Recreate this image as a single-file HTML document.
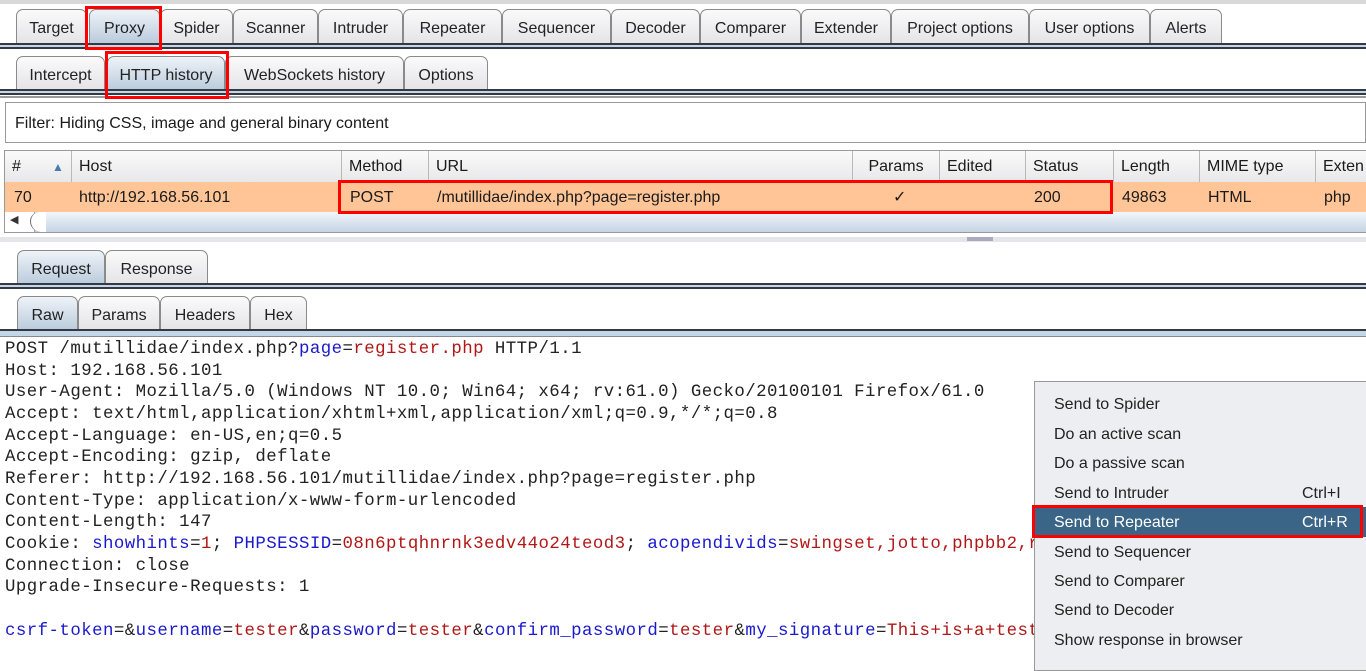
<!DOCTYPE html>
<html><head><meta charset="utf-8"><style>
*{box-sizing:border-box;margin:0;padding:0}
body{width:1366px;height:658px;overflow:hidden;background:#fff;font-family:"Liberation Sans",sans-serif;font-size:16px;color:#1a1a1a;position:relative}
.a{position:absolute}
.tab{position:absolute;height:35px;border:1px solid #8a8a8a;border-bottom:none;border-radius:7px 7px 0 0;background:linear-gradient(#fafafa,#e4e4e8);text-align:center;line-height:37px;font-size:16px;color:#222}
.tab.sel{background:linear-gradient(#eef3f8,#b9cadb)}
.band{position:absolute;left:0;width:1366px;height:6px;border-top:2px solid #333a44;border-bottom:2px solid #333a44;background:#c5d6e6}
.red{position:absolute;border:3px solid #f00}
.hc{position:absolute;top:151px;height:31px;line-height:32px;border-right:1px solid #b9b9b9;padding-left:7px;background:linear-gradient(#fafafa,#e8e8ea)}
.rc{position:absolute;top:182px;height:30px;line-height:32px;padding-left:7px}
.code{position:absolute;left:5px;top:339px;font-family:"Liberation Mono",monospace;font-size:17.4px;line-height:21.65px;white-space:pre;color:#222;letter-spacing:0.45px}
.b{color:#1a1acc}.r{color:#b01818}
.menu{position:absolute;left:1034px;top:381px;width:340px;height:290px;background:#eceef2;border:1px solid #999}
.mi{position:absolute;left:19px;font-size:16px;color:#222}
</style></head><body>
<div class="a" style="left:0;top:0;width:1366px;height:4px;background:#d8d8d8"></div>
<div class="tab" style="left:16px;top:9px;width:71px">Target</div>
<div class="tab sel" style="left:89px;top:9px;width:71px">Proxy</div>
<div class="tab" style="left:160px;top:9px;width:73px">Spider</div>
<div class="tab" style="left:233px;top:9px;width:85px">Scanner</div>
<div class="tab" style="left:318px;top:9px;width:85px">Intruder</div>
<div class="tab" style="left:403px;top:9px;width:99px">Repeater</div>
<div class="tab" style="left:502px;top:9px;width:109px">Sequencer</div>
<div class="tab" style="left:611px;top:9px;width:89px">Decoder</div>
<div class="tab" style="left:700px;top:9px;width:101px">Comparer</div>
<div class="tab" style="left:801px;top:9px;width:90px">Extender</div>
<div class="tab" style="left:891px;top:9px;width:138px">Project options</div>
<div class="tab" style="left:1029px;top:9px;width:121px">User options</div>
<div class="tab" style="left:1150px;top:9px;width:72px">Alerts</div>
<div class="band" style="top:43px"></div>
<div class="tab" style="left:16px;top:56px;width:89px">Intercept</div>
<div class="tab sel" style="left:107px;top:56px;width:118px">HTTP history</div>
<div class="tab" style="left:225px;top:56px;width:179px">WebSockets history</div>
<div class="tab" style="left:404px;top:56px;width:84px">Options</div>
<div class="band" style="top:89px"></div>
<div class="a" style="left:0;top:96px;width:1366px;height:2px;background:#999"></div>
<div class="a" style="left:5px;top:102px;width:1361px;height:41px;border:1px solid #999;background:#fff;padding-left:9px;line-height:42px;font-size:16px">Filter: Hiding CSS, image and general binary content</div>
<div class="a" style="left:4px;top:150px;width:1362px;height:83px;border:1px solid #999"></div>
<div class="hc" style="left:5px;width:67px">#<span style="position:absolute;left:47px;top:0;color:#4a7ab0;font-size:12px">▲</span></div>
<div class="hc" style="left:72px;width:270px">Host</div>
<div class="hc" style="left:342px;width:87px">Method</div>
<div class="hc" style="left:429px;width:424px">URL</div>
<div class="hc" style="left:853px;width:87px;text-align:center;padding:0">Params</div>
<div class="hc" style="left:940px;width:86px">Edited</div>
<div class="hc" style="left:1026px;width:88px">Status</div>
<div class="hc" style="left:1114px;width:86px">Length</div>
<div class="hc" style="left:1200px;width:116px">MIME type</div>
<div class="hc" style="left:1316px;width:50px;border:none">Exten</div>
<div class="a" style="left:5px;top:182px;width:1361px;height:30px;background:#ffc597"></div>
<div class="rc" style="left:7px">70</div>
<div class="rc" style="left:72px">http://192.168.56.101</div>
<div class="rc" style="left:343px">POST</div>
<div class="rc" style="left:430px">/mutillidae/index.php?page=register.php</div>
<div class="rc" style="left:886px">✓</div>
<div class="rc" style="left:1027px">200</div>
<div class="rc" style="left:1115px">49863</div>
<div class="rc" style="left:1201px">HTML</div>
<div class="rc" style="left:1317px">php</div>
<div class="a" style="left:5px;top:212px;width:1361px;height:20px;background:linear-gradient(#f3f6fa,#c4d4e4)"></div>
<div class="a" style="left:5px;top:212px;width:30px;height:20px;background:#fff;border-right:1px solid #9aa;border-radius:0 0 0 0"></div>
<div class="a" style="left:30px;top:212px;width:16px;height:20px;background:#fff;border-left:1px solid #667;border-radius:12px 0 0 14px"></div>
<div class="a" style="left:10px;top:213px;font-size:11px;color:#333">◀</div>
<div class="a" style="left:0;top:237px;width:1366px;height:5px;background:#e4e6ea"></div>
<div class="a" style="left:967px;top:237px;width:26px;height:4px;background:#aab"></div>
<div class="tab sel" style="left:17px;top:250px;width:88px">Request</div>
<div class="tab" style="left:105px;top:250px;width:103px">Response</div>
<div class="band" style="top:283px"></div>
<div class="tab sel" style="left:17px;top:296px;width:61px">Raw</div>
<div class="tab" style="left:78px;top:296px;width:82px">Params</div>
<div class="tab" style="left:160px;top:296px;width:90px">Headers</div>
<div class="tab" style="left:250px;top:296px;width:57px">Hex</div>
<div class="a" style="left:0;top:329px;width:1366px;height:8px;border-top:2px solid #333a44;border-bottom:1px solid #888;background:#c5d6e6"></div>
<div class="code">POST /mutillidae/index.php?<span class="b">page</span>=<span class="r">register.php</span> HTTP/1.1
Host: 192.168.56.101
User-Agent: Mozilla/5.0 (Windows NT 10.0; Win64; x64; rv:61.0) Gecko/20100101 Firefox/61.0
Accept: text/html,application/xhtml+xml,application/xml;q=0.9,*/*;q=0.8
Accept-Language: en-US,en;q=0.5
Accept-Encoding: gzip, deflate
Referer: http://192.168.56.101/mutillidae/index.php?page=register.php
Content-Type: application/x-www-form-urlencoded
Content-Length: 147
Cookie: <span class="b">showhints</span>=<span class="r">1</span>; <span class="b">PHPSESSID</span>=<span class="r">08n6ptqhnrnk3edv44o24teod3</span>; <span class="b">acopendivids</span>=<span class="r">swingset,jotto,phpbb2,r</span>
Connection: close
Upgrade-Insecure-Requests: 1

<span class="b">csrf-token</span>=&amp;<span class="b">username</span>=<span class="r">tester</span>&amp;<span class="b">password</span>=<span class="r">tester</span>&amp;<span class="b">confirm_password</span>=<span class="r">tester</span>&amp;<span class="b">my_signature</span>=<span class="r">This+is+a+test</span></div>
<div class="menu">
<div class="a" style="left:0;top:125px;width:340px;height:30px;background:#3a6587"></div>
<div class="mi" style="top:14px">Send to Spider</div>
<div class="mi" style="top:44px">Do an active scan</div>
<div class="mi" style="top:73px">Do a passive scan</div>
<div class="mi" style="top:103px">Send to Intruder</div><div class="mi" style="top:103px;left:267px">Ctrl+I</div>
<div class="mi" style="top:132px;color:#fff">Send to Repeater</div><div class="mi" style="top:132px;left:267px;color:#fff">Ctrl+R</div>
<div class="mi" style="top:162px">Send to Sequencer</div>
<div class="mi" style="top:191px">Send to Comparer</div>
<div class="mi" style="top:220px">Send to Decoder</div>
<div class="mi" style="top:250px">Show response in browser</div>
</div>
<div class="red" style="left:85px;top:6px;width:77px;height:44px"></div>
<div class="red" style="left:105px;top:51px;width:124px;height:48px"></div>
<div class="red" style="left:338px;top:180px;width:775px;height:34px"></div>
<div class="red" style="left:1032px;top:505px;width:331px;height:33px"></div>
</body></html>
